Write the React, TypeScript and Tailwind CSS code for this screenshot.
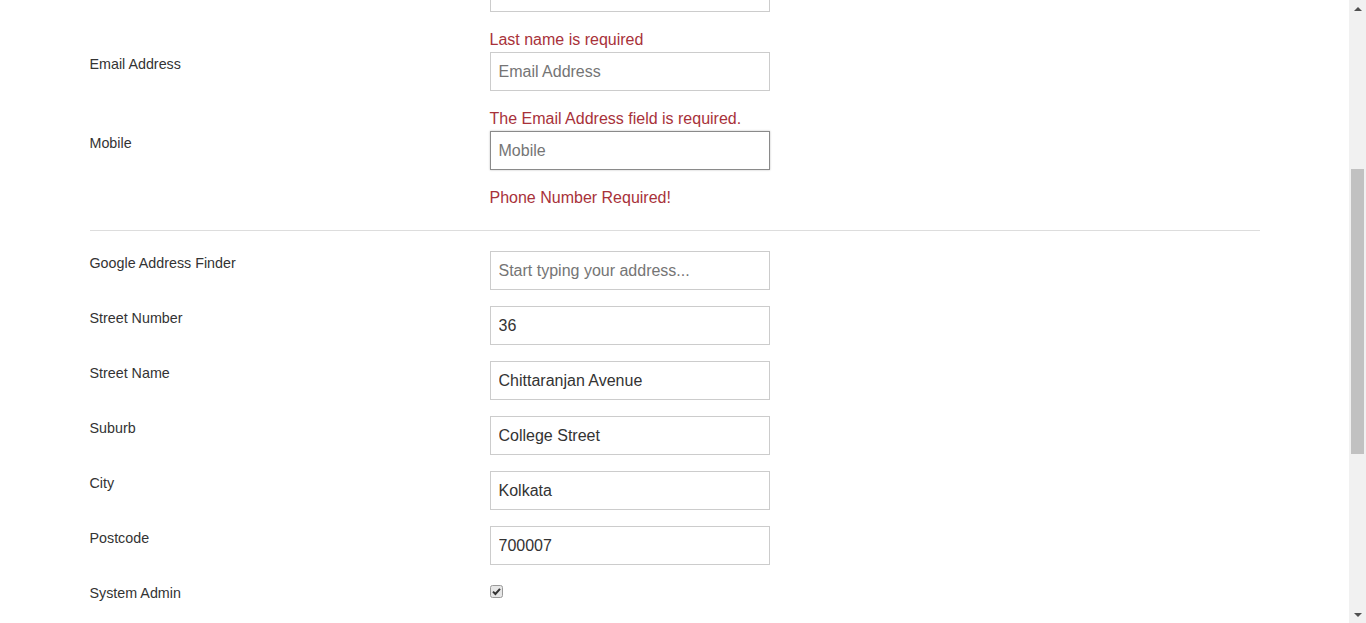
type Field = {
  label: string;
  value?: string;
  placeholder?: string;
  error?: string;
  focused?: boolean;
};

// the last name row is scrolled mostly out of view; only its input's bottom edge shows
const personal: Field[] = [
  { label: "", error: "Last name is required" },
  { label: "Email Address", placeholder: "Email Address", error: "The Email Address field is required." },
  { label: "Mobile", placeholder: "Mobile", error: "Phone Number Required!", focused: true },
];

const address: Field[] = [
  { label: "Google Address Finder", placeholder: "Start typing your address..." },
  { label: "Street Number", value: "36" },
  { label: "Street Name", value: "Chittaranjan Avenue" },
  { label: "Suburb", value: "College Street" },
  { label: "City", value: "Kolkata" },
  { label: "Postcode", value: "700007" },
];

function Row({ f, last }: { f: Field; last?: boolean }) {
  return (
    <div className={`flex ${f.error ? (last ? "" : "mb-[2px]") : "mb-[16px]"}`}>
      <label className="w-[400px] shrink-0 pt-[2px] text-[14.3px] leading-5 text-[#333]">{f.label}</label>
      <div className="flex w-[280px] flex-col">
        <input
          readOnly
          defaultValue={f.value}
          placeholder={f.placeholder}
          className={`h-[39px] w-[280px] border bg-white px-2 text-[16px] text-[#333] outline-none placeholder:text-[#757575] ${
            f.focused ? "border-[#8a8a8a] shadow-[0_0_2px_rgba(0,0,0,0.25)]" : "border-[#cccccc]"
          }`}
        />
        {f.error && <span className="mt-[18px] text-[16px] leading-5 text-[#a8323a]">{f.error}</span>}
      </div>
    </div>
  );
}

export default function App() {
  return (
    <div className="flex h-[623px] overflow-hidden bg-white font-['Liberation_Sans',Arial,sans-serif]">
      <main className="flex-1">
        <div className="mx-auto -mt-[27px] w-[1170px]">
          {personal.map((f, i) => (
            <Row key={i} f={f} last={i === personal.length - 1} />
          ))}
          <hr className="mt-[22px] mb-[20px] border-t border-[#dddddd]" />
          {address.map((f) => (
            <Row key={f.label} f={f} />
          ))}
          <div className="flex">
            <label className="w-[400px] shrink-0 pt-[2px] text-[14.3px] leading-5 text-[#333]">System Admin</label>
            <div className="pt-1">
              <svg width="13" height="13" viewBox="0 0 13 13">
                <rect x="0.5" y="0.5" width="12" height="12" rx="2" fill="#e6e6e6" stroke="#9a9a9a" />
                <path d="M3 6.6 L5.4 9 L10 3.8" fill="none" stroke="#333" strokeWidth="2" />
              </svg>
            </div>
          </div>
        </div>
      </main>
      <aside className="flex h-full w-[17px] shrink-0 flex-col bg-[#f1f1f1]">
        <div className="flex h-[17px] items-center justify-center">
          <span className="h-0 w-0 border-x-[4px] border-b-[4px] border-x-transparent border-b-[#505050]" />
        </div>
        <div className="flex flex-1 flex-col px-[2px]">
          <div className="h-[152px]" />
          <div className="h-[285px] bg-[#c1c1c1]" />
        </div>
        <div className="flex h-[17px] items-center justify-center">
          <span className="h-0 w-0 border-x-[4px] border-t-[4px] border-x-transparent border-t-[#505050]" />
        </div>
      </aside>
    </div>
  );
}
